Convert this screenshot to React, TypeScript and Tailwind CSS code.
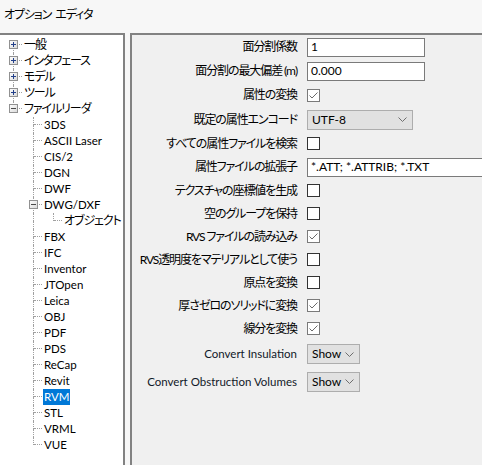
import React from "react";

type CellSpec = { up?: boolean; down?: boolean; branch?: boolean; box?: "plus" | "minus" };
type TreeRow = { cells: CellSpec[]; label: string; latin?: boolean; selected?: boolean };

const topLabels = ["一般", "インタフェース", "モデル", "ツール", "ファイルリーダ"];
const readers = [
  "3DS", "ASCII Laser", "CIS/2", "DGN", "DWF", "DWG/DXF", "FBX", "IFC", "Inventor", "JTOpen",
  "Leica", "OBJ", "PDF", "PDS", "ReCap", "Revit", "RVM", "STL", "VRML", "VUE",
];

function buildRows(): TreeRow[] {
  const rows: TreeRow[] = topLabels.map((label, i) => ({
    label,
    cells: [{ up: i > 0, down: i < topLabels.length - 1, branch: true, box: i < 4 ? "plus" : "minus" }],
  }));
  readers.forEach((label, j) => {
    const last = j === readers.length - 1;
    rows.push({
      label,
      latin: true,
      selected: label === "RVM",
      cells: [{}, { up: true, down: !last, branch: true, box: label === "DWG/DXF" ? "minus" : undefined }],
    });
    if (label === "DWG/DXF") {
      rows.push({
        label: "オブジェクト フィルタ",
        cells: [{}, { up: true, down: true }, { up: true, branch: true }],
      });
    }
  });
  return rows;
}

function ExpandBox({ kind }: { kind: "plus" | "minus" }) {
  return (
    <svg width="9" height="9" viewBox="0 0 9 9" className="absolute left-[5px] top-[3px]">
      <defs>
        <linearGradient id="bx" x1="0" y1="0" x2="1" y2="1">
          <stop offset="0" stopColor="#ffffff" />
          <stop offset="1" stopColor="#d8d8d8" />
        </linearGradient>
      </defs>
      <rect x="0.5" y="0.5" width="8" height="8" fill="url(#bx)" stroke="#919191" />
      <line x1="2" y1="4.5" x2="7" y2="4.5" stroke={kind === "plus" ? "#23408a" : "#4a4a4a"} />
      {kind === "plus" && <line x1="4.5" y1="2" x2="4.5" y2="7" stroke="#23408a" />}
    </svg>
  );
}

function Cell({ spec }: { spec: CellSpec }) {
  return (
    <div className="relative flex h-4 w-5 shrink-0">
      <div className="flex w-[10px] flex-col">
        <div className={spec.up ? "h-2 border-r border-dotted border-[#a0a0a0]" : "h-2"} />
        <div className={spec.down ? "h-2 border-r border-dotted border-[#a0a0a0]" : "h-2"} />
      </div>
      <div className="flex w-2 flex-col">
        <div className={spec.branch ? "h-2 border-b border-dotted border-[#a0a0a0]" : "h-2"} />
      </div>
      {spec.box && <ExpandBox kind={spec.box} />}
    </div>
  );
}

function Tree() {
  const rows = buildRows();
  return (
    <div className="flex flex-col pl-1 pt-[2px]">
      {rows.map((row, i) => (
        <div key={i} className="flex h-4 items-center whitespace-nowrap">
          {row.cells.map((c, k) => (
            <Cell key={k} spec={c} />
          ))}
          <span
            className={
              (row.selected ? "bg-[#0078d7] text-white " : "text-black ") +
              (row.latin ? "text-[11.5px] " : "text-[12px] tracking-[-1.1px] ") +
              "-ml-px shrink-0 px-px leading-4"
            }
          >
            {row.label}
          </span>
        </div>
      ))}
    </div>
  );
}

function Check({ checked }: { checked?: boolean }) {
  return (
    <span
      className={
        checked
          ? "flex h-[13px] w-[13px] items-center justify-center border border-[#7a7a7a] bg-white"
          : "flex h-[13px] w-[13px] items-center justify-center border border-[#333333] bg-white"
      }
    >
      {checked && (
        <svg width="11" height="11" viewBox="0 0 11 11">
          <path d="M1.5 5.5 L4 8 L9.5 2.5" fill="none" stroke="#6a6a6a" strokeWidth="1" />
        </svg>
      )}
    </span>
  );
}

function TextBox({ value, width }: { value: string; width: string }) {
  return (
    <div className={`flex h-[19px] items-center border border-[#7a7a7a] bg-white pl-[3px] text-[12px] ${width}`}>
      {value}
    </div>
  );
}

function Combo({ value, width }: { value: string; width: string }) {
  return (
    <div
      className={`flex h-5 items-center justify-between border border-[#adadad] bg-[#e1e1e1] pl-1 pr-[5px] text-[12px] ${width}`}
    >
      <span>{value}</span>
      <svg width="9" height="5" viewBox="0 0 9 5">
        <path d="M0.5 0.5 L4.5 4.5 L8.5 0.5" fill="none" stroke="#6e6e6e" />
      </svg>
    </div>
  );
}

function Row({
  label,
  height,
  latin,
  children,
}: {
  label: string;
  height: string;
  latin?: boolean;
  children: React.ReactNode;
}) {
  return (
    <div className={`flex items-center ${height}`}>
      <div
        className={
          latin
            ? "w-[165px] shrink-0 whitespace-nowrap text-right text-[11.5px] leading-4 text-[#101828]"
            : "w-[165px] shrink-0 whitespace-nowrap text-right text-[12px] leading-4 tracking-[-1.1px]"
        }
      >
        {label}
      </div>
      <div className="ml-[10px] flex items-center">{children}</div>
    </div>
  );
}

export default function App() {
  return (
    <div className="flex h-[465px] w-[482px] flex-col overflow-hidden bg-[#f7f7f7] font-['Segoe_UI','Lato','Noto_Sans_CJK_JP',sans-serif] text-black [font-feature-settings:'palt']">
      {/* タイトル */}
      <div className="h-[33px] shrink-0 whitespace-pre pl-1 pt-[7px] text-[12px] leading-4 tracking-[-1.1px]">
        オプション  エディタ
      </div>

      <div className="flex min-h-0 flex-1">
        {/* ツリー */}
        <div className="w-[125px] shrink-0 overflow-hidden border-r-2 border-t-2 border-[#828282] bg-white">
          <Tree />
        </div>

        {/* 設定パネル */}
        <div className="ml-[5px] flex-1 overflow-hidden border-l-2 border-t-2 border-[#828282] bg-[#f0f0f0]">
          <Row label="面分割係数" height="h-6">
            <TextBox value="1" width="w-[118px]" />
          </Row>
          <Row label="面分割の最大偏差 (m)" height="h-6">
            <TextBox value="0.000" width="w-[118px]" />
          </Row>
          <Row label="属性の変換" height="h-6">
            <Check checked />
          </Row>
          <Row label="既定の属性エンコード" height="h-[25px]">
            <Combo value="UTF-8" width="w-[106px]" />
          </Row>
          <Row label="すべての属性ファイルを検索" height="h-[23px]">
            <Check />
          </Row>
          <Row label="属性ファイルの拡張子" height="h-6">
            <TextBox value="*.ATT; *.ATTRIB; *.TXT" width="w-[200px]" />
          </Row>
          <Row label="テクスチャの座標値を生成" height="h-[23px]">
            <Check />
          </Row>
          <Row label="空のグループを保持" height="h-[23px]">
            <Check />
          </Row>
          <Row label="RVS ファイルの読み込み" height="h-[23px]">
            <Check checked />
          </Row>
          <Row label="RVS透明度をマテリアルとして使う" height="h-[23px]">
            <Check />
          </Row>
          <Row label="原点を変換" height="h-[23px]">
            <Check />
          </Row>
          <Row label="厚さゼロのソリッドに変換" height="h-[23px]">
            <Check checked />
          </Row>
          <Row label="線分を変換" height="h-[23px]">
            <Check checked />
          </Row>
          <Row label="Convert Insulation" height="h-[28px]" latin>
            <Combo value="Show" width="w-[53px]" />
          </Row>
          <Row label="Convert Obstruction Volumes" height="h-[27px]" latin>
            <Combo value="Show" width="w-[53px]" />
          </Row>
        </div>
      </div>
    </div>
  );
}
